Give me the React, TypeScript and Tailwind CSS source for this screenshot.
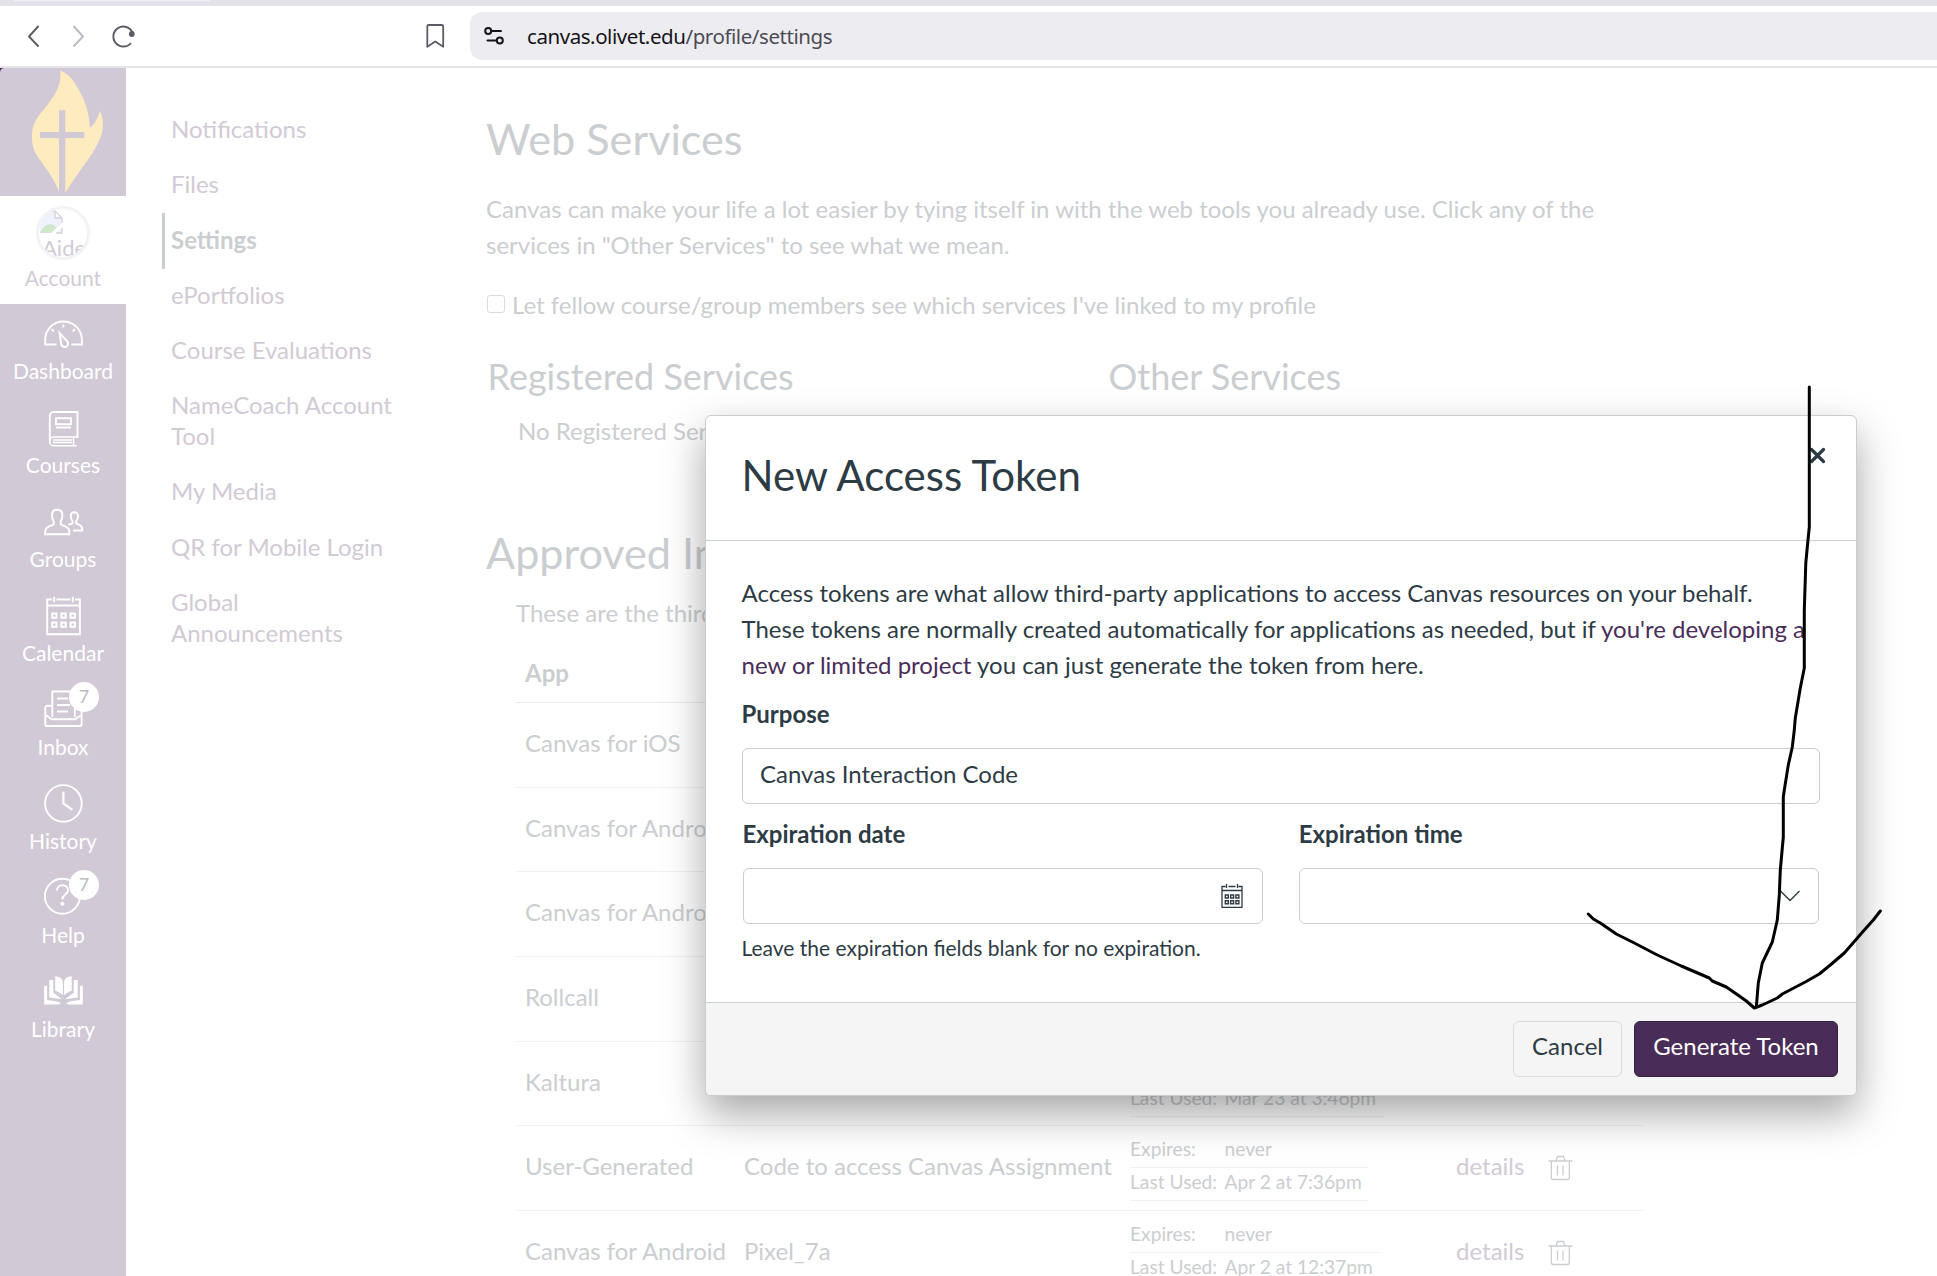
import type { ReactNode } from "react";

const stroke = {
  fill: "none",
  stroke: "currentColor",
  strokeWidth: 1.9,
};

const navIcons: Record<string, ReactNode> = {
  Dashboard: (
    <g {...stroke}>
      <path d="M12.5 30.5H1.2V26C1.2 15.5 9 7.5 19.3 7.5S37.9 15.5 37.9 26v4.500H27.500" />
      <path d="M15.500 19l8 8.500c1.300 2 .5 4.700-1.700 5.300-2.300.6-4.200-.7-4.600-2.800z" />
      <path d="M19.300 10.500v3M7.600 15.200l2.300 2.200M31 15.200l-2.300 2.200" />
    </g>
  ),
  Courses: (
    <g {...stroke} transform="translate(0 .5)">
      <path d="M33.500 29.500V3.500H9.500A3.800 3.800 0 0 0 5.800 7.300V33" />
      <path d="M33.500 28.500H10a4.400 4.400 0 0 0 0 8.800h23M29.500 28.500v8.500M9 31.500h19M9 34h19" strokeWidth="1.500" />
      <path d="M12 9.700h15v6H12zM12 19h15" />
    </g>
  ),
  Groups: (
    <g {...stroke}>
      <path d="M1.200 32.300v-2.500c0-4.500 3-4.800 8.500-7.300v-3.200C8.300 17.500 8 15.500 8 13c0-3.500 2-5.300 5.200-5.300s5.200 1.800 5.200 5.300c0 2.500-.3 4.500-1.700 6.300v3.200c5.500 2.500 8.600 2.800 8.600 7.300v2.500z" />
      <path d="M29 28.500h9.200v-1.500c0-3.500-2.500-4.300-6-5.700v-2c1.300-1.500 1.800-3 1.800-5 0-2.600-1.500-4-3.600-4s-3.600 1.400-3.600 4c0 2 .5 3.500 1.800 5v2l-4.300 1.600" />
    </g>
  ),
  Calendar: (
    <g {...stroke}>
      <path d="M8 3.500H3.200V38.200H35.900V3.500H31M12.500 3.500H26.500M3.200 9.500H35.900M10.200.8v5.500M28.800.8v5.500" />
      <path d="M8.200 17.500h4.300v4.300H8.200zM17.400 17.500h4.300v4.300h-4.300zM26.600 17.500h4.300v4.300h-4.300zM8.200 26.500h4.300v4.300H8.200zM17.400 26.500h4.300v4.300h-4.300zM26.600 26.500h4.300v4.300h-4.300z" strokeWidth="2" />
    </g>
  ),
  Inbox: (
    <g {...stroke}>
      <path d="M8.300 27V1.500H30.800V27" />
      <path d="M13 8.500h11M13 15h13M13 21.500h11" strokeWidth="2" />
      <path d="M8 15.800H3.500Q1.300 15.800 1.300 18V34.500Q1.300 36 3 36H36Q37.600 36 37.600 34.500V18Q37.600 15.800 35.500 15.800H31M1.500 25l6.300 4.300H31l6.500-4.300" />
    </g>
  ),
  History: (
    <g {...stroke}>
      <circle cx="19.400" cy="19.400" r="18.300" />
      <path d="M19.400 7.800v11.700l9 6.300" strokeWidth="2.200" />
    </g>
  ),
  Help: (
    <g {...stroke}>
      <circle cx="18.400" cy="18.300" r="17.500" />
      <path d="M13 12.500c0-3.300 2.400-5.300 5.500-5.300s5.500 2 5.500 5c0 4.300-5.700 4.500-5.700 9.300" />
      <circle cx="18.400" cy="25.800" r="2" fill="currentColor" stroke="none" />
    </g>
  ),
  Library: (
    <g fill="currentColor" transform="translate(0 .7)">
      <path d="M11.200 3.600c4.500.4 7.300 2.200 7.700 6v13c-2-2.200-4.700-3.500-7.700-4.600zM27.700 3.600c-4.500.4-7.300 2.200-7.700 6v13c2-2.200 4.700-3.500 7.700-4.600z" />
      <path d="M5.300 7.300h4V20l8.700 6.500-12.700-1.700zM33.700 7.300h-4V20L21 26.500l12.700-1.700z" />
      <path d="M.2 13h2.900v14.300c5 .8 10 .9 13.800 3.200l-2.200 1.200H.2zM38.800 13h-2.900v14.300c-5 .8-10 .9-13.800 3.200l2.200 1.200h14.500z" />
    </g>
  ),
};

const navItems: { name: string; badge?: string }[] = [
  { name: "Dashboard" },
  { name: "Courses" },
  { name: "Groups" },
  { name: "Calendar" },
  { name: "Inbox", badge: "7" },
  { name: "History" },
  { name: "Help", badge: "7" },
  { name: "Library" },
];

const links = [
  "Notifications",
  "Files",
  "Settings",
  "ePortfolios",
  "Course Evaluations",
  "NameCoach Account Tool",
  "My Media",
  "QR for Mobile Login",
  "Global Announcements",
];

const integrations = [
  { app: "Canvas for iOS" },
  { app: "Canvas for Android" },
  { app: "Canvas for Android" },
  { app: "Rollcall" },
  { app: "Kaltura", used: "Mar 23 at 3:46pm", width: "w-[254px]" },
  { app: "User-Generated", purpose: "Code to access Canvas Assignment", used: "Apr 2 at 7:36pm", width: "w-[239px]" },
  { app: "Canvas for Android", purpose: "Pixel_7a", used: "Apr 2 at 12:37pm", width: "w-[251px]" },
];

function BrowserBar() {
  return (
    <div className="h-[68px] shrink-0 border-b-2 border-[#e5e4ea] bg-white">
      <div className="h-1.5 bg-[#e3e2e8]">
        <div className="ml-3.5 h-px w-[196px] bg-[#f0f0f4]" />
      </div>
      <div className="flex h-[60px] items-center pl-[22px]">
        <svg width="120" height="30" viewBox="0 0 120 30" fill="none" strokeWidth="1.900" className="shrink-0">
          <path d="M16.500 5L7 15.500l9.500 10" stroke="#5b5c66" />
          <path d="M51.500 5L61 15.500l-9.500 10" stroke="#b9b9bf" />
          <path d="M110.500 11.500A10 10 0 1 0 109 22" stroke="#5b5c66" />
          <circle cx="109.800" cy="13" r="2.900" fill="#5b5c66" />
        </svg>
        <svg width="20" height="26" viewBox="0 0 20 26" fill="none" stroke="#5b5c66" strokeWidth="1.800" className="ml-[284px] shrink-0">
          <path d="M2.500 2h13.200q1.500 0 1.500 1.500v20.200L9.300 18.500 1.300 23.700V3.500Q1.300 2 2.500 2z" strokeLinejoin="round" />
        </svg>
        <div className="ml-6 flex h-12 grow items-center rounded-l-[12px] bg-[#ededf1] pl-[14px]">
          <svg width="22" height="20" viewBox="0 0 22 20" fill="none" stroke="#15141a" strokeWidth="2">
            <circle cx="4.200" cy="5" r="3" />
            <path d="M8 5h9M3.500 14.500h9" strokeLinecap="round" />
            <circle cx="15.800" cy="14.500" r="3" />
          </svg>
          <span className="ml-[21px] font-['Noto_Sans'] text-[20.500px] whitespace-pre text-[#15141a] tracking-[-0.440px]">
            canvas.olivet.edu<span className="text-[#4c4b55]">/profile/settings</span>
          </span>
        </div>
      </div>
    </div>
  );
}

function GlobalNav() {
  return (
    <nav className="flex w-[126px] shrink-0 flex-col bg-[#d1c9d5] text-[21px] leading-[26px]">
      <svg width="126" height="128" viewBox="0 0 126 128" className="shrink-0">
        <path d="M0 0h5Q0 0 0 5z" fill="#4a2c59" />
        <path
          d="M60.300 3C71 5.500 79 21 84 32c3.500 8.500 5 17 6 27.700 5-3.700 8-9.700 9.700-17 3.300 6.300 3.800 13.300 2.800 19.300-1.500 9-7.500 20-14.500 29.500-8 11-16 22.500-22.700 33.300L59 123.700C56 114 46 100 37.500 88.500 33 82 32 76 32 68.500 32 60 34 54 39 47.500 50 33 62 22 60.300 3z"
          fill="#feebc0"
        />
        <path d="M59 42.300h6.300V64h19v6h-19v55H59V70H40v-6h19z" fill="#d1c9d5" />
      </svg>
      <div className="flex h-[108px] shrink-0 flex-col items-center bg-white pt-[10px] text-[#d2cad5]">
        <div className="h-[54px] w-[54px] overflow-hidden rounded-full border-[3px] border-[#f1f3f4]">
          <svg width="24" height="24" viewBox="0 0 24 24" className="mt-px">
            <path d="M1 1h15v6h7v16H1z" fill="#eef2fd" />
            <path d="M1 23c3-9 12-12 17-5l-5 5z" fill="#cfe8cc" />
            <path d="M12 23L24 12v5l-7 6z" fill="#fff" />
            <path d="M1 1h15l7 7v5M23 18v5h-6M16 1v7h7" fill="none" stroke="#d5d5d8" strokeWidth="1.300" />
          </svg>
          <div className="ml-[3px] text-[22px] leading-[28px] whitespace-nowrap">Aide</div>
        </div>
        <div className="mt-[5px]">Account</div>
      </div>
      {navItems.map((item) => (
        <div key={item.name} className="relative flex h-[94px] shrink-0 flex-col items-center pt-2.5 text-white">
          <svg width="39" height="39" viewBox="0 0 39 39" className="shrink-0 overflow-visible">
            {navIcons[item.name]}
          </svg>
          <div className="mt-[5px]">{item.name}</div>
          {item.badge && (
            <span className="absolute top-0.5 left-[69px] flex h-[30px] w-[30px] items-center justify-center rounded-full bg-white pb-[3px] text-[18px] text-[#b9bdc1]">
              {item.badge}
            </span>
          )}
        </div>
      ))}
    </nav>
  );
}

function ProfileLinks() {
  return (
    <div className="flex w-[360px] shrink-0 flex-col pt-[33px] pl-9 text-[24px] leading-[31.200px] text-[#d2cad5]">
      {links.map((link) =>
        link === "Settings" ? (
          <div
            key={link}
            className="mt-0.5 -mb-0.5 w-[240px] border-l-3 border-[#cbced1] pt-[10.500px] pb-[13.500px] pl-1.5 font-bold text-[#cbced1]"
          >
            {link}
          </div>
        ) : (
          <div key={link} className="w-[250px] py-3 pl-[9px]">
            {link}
          </div>
        ),
      )}
    </div>
  );
}

function Trash() {
  return (
    <svg width="25" height="26" viewBox="0 0 25 26" fill="none" stroke="#cbced1" strokeWidth="1.300">
      <path d="M.5 6H24.500M8 6L9.500 1.500h6L17 6M3.300 6v16.500q0 2 2 2h14q2 0 2-2V6M9.500 10.500v10M15 10.500v10" />
    </svg>
  );
}

function Integrations() {
  return (
    <div className="ml-[30px] w-[1128px]">
      <div className="h-[72px] border-b border-[#e9ebec] pt-6 pl-[9px] font-bold">App</div>
      {integrations.map((row, i) => (
        <div key={i} className="flex h-[84.670px] border-b border-[#f1f2f3] pl-[9px]">
          <div className="w-[219px] self-center pb-[3.500px] whitespace-nowrap">{row.app}</div>
          <div className="w-[386px] self-center pb-[3.500px] whitespace-nowrap">{row.purpose}</div>
          <div className="w-[326px] pt-[9px] text-[19.200px] leading-[27px]">
            {row.used && (
              <div className={row.width}>
                <div className="flex h-[33px] border-b border-[#f1f2f3]">
                  <span className="w-[94.500px]">Expires:</span>never
                </div>
                <div className="flex h-[33px] border-b border-[#f1f2f3]">
                  <span className="w-[94.500px]">Last Used:</span>
                  {row.used}
                </div>
              </div>
            )}
          </div>
          {row.used && (
            <div className="flex items-center pb-[3.500px]">
              <span className="w-[92px] text-[#d2cad5]">details</span>
              <div className="pt-[3px]">
                <Trash />
              </div>
            </div>
          )}
        </div>
      ))}
    </div>
  );
}

function Main() {
  return (
    <main className="w-[1200px] shrink-0 pt-11 text-[24px] leading-9 text-[#cbced1]">
      <h1 className="text-[43.200px] leading-[52px]">Web Services</h1>
      <p className="mt-[27px] w-[1150px]">
        Canvas can make your life a lot easier by tying itself in with the web tools you already use. Click any of the
        <br />
        services in "Other Services" to see what we mean.
      </p>
      <label className="mt-6 flex">
        <span className="mt-2 ml-px h-[18px] w-[18px] rounded-[3px] border-[1.500px] border-[#dcdce0]" />
        <span className="ml-[7px]">Let fellow course/group members see which services I've linked to my profile</span>
      </label>
      <div className="mt-[31px] flex text-[36px] leading-[44px]">
        <h2 className="ml-[1.500px] w-[621px]">Registered Services</h2>
        <h2>Other Services</h2>
      </div>
      <p className="mt-[15px] ml-8">No Registered Services</p>
      <h1 className="mt-[77px] text-[43.200px] leading-[52px]">Approved Integrations</h1>
      <p className="mt-[17px] ml-[30px]">These are the third-party applications you have authorized</p>
      <Integrations />
    </main>
  );
}

function CalendarGlyph() {
  return (
    <svg width="22" height="24" viewBox="0 0 22 24" fill="none" stroke="#2d3b45" strokeWidth="1.300">
      <path d="M4.500 2.500H1v20.800h20V2.500h-3.500M7.500 2.500h7M1 6.500h20M5.500 0v4M16.500 0v4" />
      <path d="M4.300 11h3v3h-3zM9.600 11h3v3h-3zM14.900 11h3v3h-3zM4.300 16.700h3v3h-3zM9.600 16.700h3v3h-3zM14.900 16.700h3v3h-3z" strokeWidth="1.400" />
    </svg>
  );
}

function Dialog() {
  return (
    <section className="absolute top-[415px] left-[705px] flex h-[681px] w-[1152px] flex-col overflow-hidden rounded-[6px] border border-[#c7cdd1] bg-white text-[24px] leading-9 text-[#2d3b45] shadow-[0_18px_42px_rgba(0,0,0,0.350)]">
      <header className="flex h-[125px] shrink-0 justify-between border-b border-[#c7cdd1] pt-[33px] pr-[30px] pl-[35.500px]">
        <h2 className="text-[42px] leading-[52px]">New Access Token</h2>
        <svg width="17" height="17" viewBox="0 0 17 17" stroke="#2d3b45" strokeWidth="3.200" strokeLinecap="round" className="-mt-0.5">
          <path d="M2.500 2.500l12 12M14.500 2.500l-12 12" />
        </svg>
      </header>
      <div className="grow pt-[34px] pr-9 pl-[35.500px]">
        <p className="whitespace-nowrap">
          Access tokens are what allow third-party applications to access Canvas resources on your behalf.
          <br />
          These tokens are normally created automatically for applications as needed, but if{" "}
          <span className="text-[#4a2c59]">you're developing a</span>
          <br />
          <span className="text-[#4a2c59]">new or limited project</span> you can just generate the token from here.
        </p>
        <div className="mt-[13px] font-bold">Purpose</div>
        <div className="mt-4 flex h-14 items-center rounded-[6px] border border-[#c7cdd1] pb-1 pl-[17.500px]">
          Canvas Interaction Code
        </div>
        <div className="mt-3 flex gap-9 px-px">
          <div className="flex-1">
            <div className="font-bold">Expiration date</div>
            <div className="mt-4 flex h-14 items-center justify-end rounded-[6px] border border-[#c7cdd1] pr-[19px]">
              <CalendarGlyph />
            </div>
          </div>
          <div className="flex-1">
            <div className="font-bold">Expiration time</div>
            <div className="mt-4 flex h-14 items-center justify-end rounded-[6px] border border-[#c7cdd1] pr-[18px]">
              <svg width="20" height="12" viewBox="0 0 20 12" fill="none" stroke="#2d3b45" strokeWidth="1.400">
                <path d="M.5 1l9.500 9.500L19.500 1" />
              </svg>
            </div>
          </div>
        </div>
        <p className="mt-2 text-[21px] leading-8">Leave the expiration fields blank for no expiration.</p>
      </div>
      <footer className="flex h-[93px] shrink-0 justify-end gap-3 border-t border-[#c7cdd1] bg-[#f5f5f5] pt-[18px] pr-[18px]">
        <button className="h-14 w-[109px] rounded-[6px] border border-[#d7dade] bg-[#f5f5f5] pb-1.5">Cancel</button>
        <button className="h-14 w-[204px] rounded-[6px] border border-[#33203e] bg-[#4a2c59] pb-1.5 text-white">
          Generate Token
        </button>
      </footer>
    </section>
  );
}

function Arrow() {
  return (
    <svg
      width="1937"
      height="1276"
      viewBox="0.7 0 1937 1276"
      fill="none"
      stroke="#000"
      strokeWidth="3"
      strokeLinecap="round"
      strokeLinejoin="round"
      className="pointer-events-none absolute top-0 left-0"
    >
      <path d="M1810 387V527L1808 547 1806.500 563 1805 610V668L1801 688 1796 718 1795 730 1793 747 1789 765 1785 790 1784 797V837L1781 870 1780 895 1778 920 1773 942 1763 963 1759 983 1757 1007" />
      <path d="M1589 914L1594 919 1601 923 1617 934 1635 943 1658 955 1682 966 1710 978 1713 981 1727 987 1740 996 1747 1001 1755 1008 1763 1005 1778 998 1783 994 1806 982 1820 974 1831 965 1845 953 1865 930 1874 920 1881 911" />
    </svg>
  );
}

export default function App() {
  return (
    <div className="relative flex h-[1276px] w-[1937px] flex-col overflow-hidden bg-white font-['Lato',sans-serif]">
      <BrowserBar />
      <div className="flex min-h-0 grow overflow-hidden">
        <GlobalNav />
        <ProfileLinks />
        <Main />
      </div>
      <Dialog />
      <Arrow />
    </div>
  );
}
